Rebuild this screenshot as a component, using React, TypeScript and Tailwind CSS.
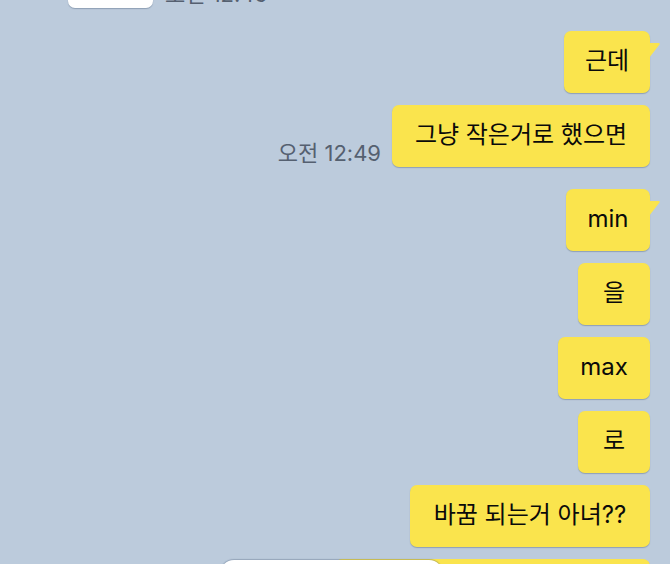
import React from "react";

const FONT = { fontFamily: 'Inter, "Noto Sans CJK KR", sans-serif' };

function Tail() {
  return (
    <svg
      className="absolute right-[-11px] top-[12px]"
      width="12"
      height="16"
      viewBox="0 0 12 16"
    >
      <path d="M0 0 H9.5 Q11.5 0 10.5 1.5 L0 15 Z" fill="#fae44d" />
    </svg>
  );
}

function Out({
  text,
  w,
  tail,
  time,
}: {
  text: string;
  w: string;
  tail?: boolean;
  time?: string;
}) {
  return (
    <div className="flex items-end justify-end gap-[11px]">
      {time && (
        <span className="mb-[1px] text-[22px] leading-[26px] text-[#556070]">
          {time}
        </span>
      )}
      <div
        className={`relative flex h-[62px] ${w} items-center justify-center rounded-[7px] bg-[#fae44d] pb-[3px] text-[24px] text-[#0a0a0a] shadow-[0_1px_1px_rgba(60,80,110,0.35)]`}
      >
        {text}
        {tail && <Tail />}
      </div>
    </div>
  );
}

export default function App() {
  return (
    <div
      className="relative flex h-[564px] w-[670px] flex-col overflow-hidden bg-[#bccbdc] pr-[20px]"
      style={FONT}
    >
      <div className="mt-[-54px] flex items-end gap-[12px] pl-[68px]">
        <div className="h-[62px] w-[85px] rounded-[7px] bg-white shadow-[0_1px_1px_rgba(60,80,110,0.35)]" />
        <span className="mb-[1px] text-[22px] leading-[26px] text-[#556070]">
          오전 12:49
        </span>
      </div>
      <div className="mt-[23px] flex flex-col gap-[12px]">
        <Out text="근데" w="w-[86px]" tail />
        <Out text="그냥 작은거로 했으면" w="w-[258px]" time="오전 12:49" />
      </div>
      <div className="mt-[22px] flex flex-col gap-[12px]">
        <Out text="min" w="w-[84px]" tail />
        <Out text="을" w="w-[72px]" />
        <Out text="max" w="w-[92px]" />
        <Out text="로" w="w-[72px]" />
        <Out text="바꿈 되는거 아녀??" w="w-[240px]" />
        <Out text="" w="w-[315px]" />
      </div>
      <div className="absolute left-[220px] top-[560px] h-[40px] w-[223px] rounded-t-[14px] bg-white shadow-[0_-1px_1px_rgba(60,80,110,0.3)]" />
    </div>
  );
}
